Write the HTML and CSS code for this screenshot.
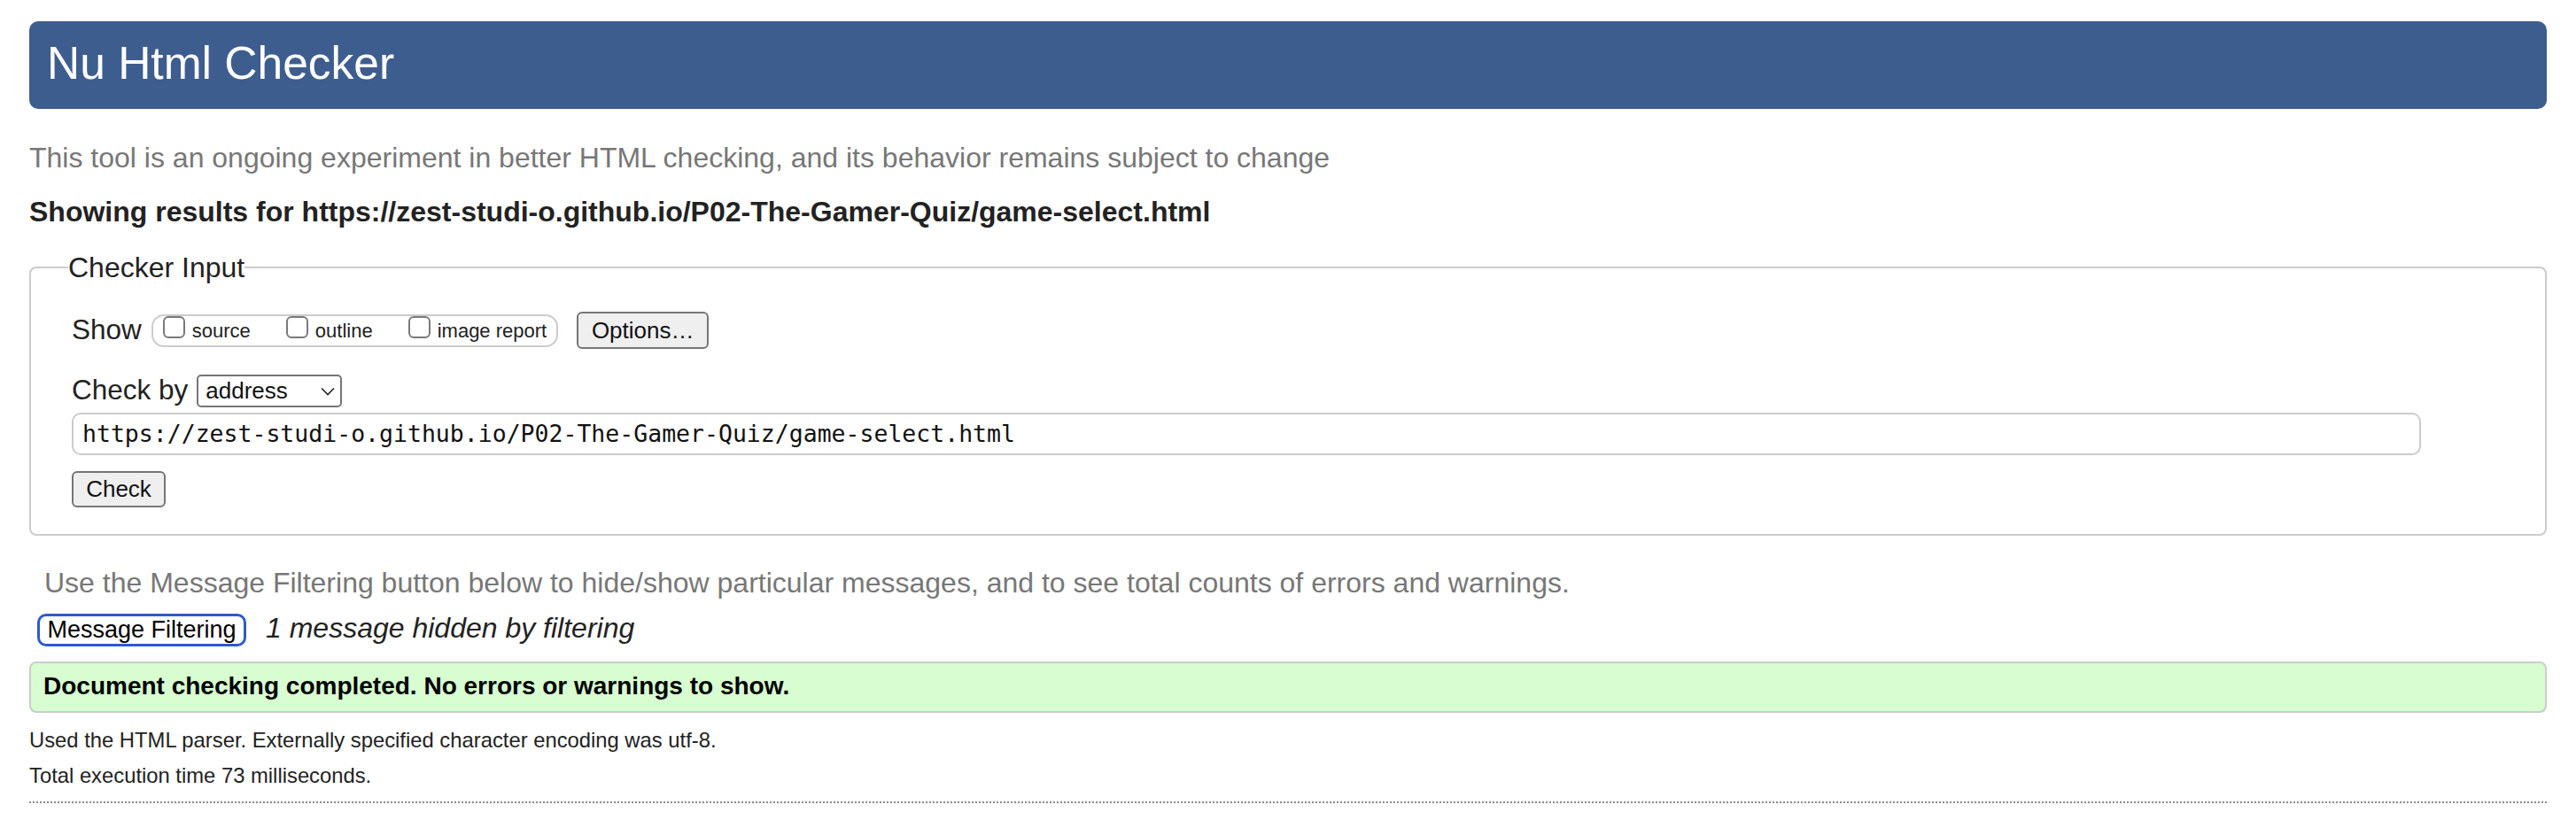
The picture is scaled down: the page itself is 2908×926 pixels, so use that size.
FILE: index.html
```html
<!DOCTYPE html>
<html lang="en">
<head>
<meta charset="utf-8">
<title>Nu Html Checker</title>
<link rel="stylesheet" href="styles.css">
</head>
<body>
<header class="masthead"><h1 class="title">Nu Html Checker</h1></header>
<p class="intro">This tool is an ongoing experiment in better HTML checking, and its behavior remains subject to change</p>
<p class="results-for">Showing results for https://zest-studi-o.github.io/P02-The-Gamer-Quiz/game-select.html</p>
<form class="checker">
  <fieldset class="fs">
    <legend class="legend">Checker Input</legend>
    <div class="row row-show">
      <span class="label">Show</span>
      <span class="show-group">
        <label class="opt"><input type="checkbox" class="cb"><span>source</span></label>
        <label class="opt"><input type="checkbox" class="cb"><span>outline</span></label>
        <label class="opt"><input type="checkbox" class="cb"><span>image report</span></label>
      </span>
      <button type="button" class="btn btn-options">Options…</button>
    </div>
    <div class="row row-by">
      <span class="label">Check by</span>
      <span class="select"><span>address</span><svg class="chev" width="16" height="10" viewBox="0 0 16 10"><path d="M1 1.5 L8 8.5 L15 1.5" fill="none" stroke="#222" stroke-width="1.6"/></svg></span>
    </div>
    <div class="url">https://zest-studi-o.github.io/P02-The-Gamer-Quiz/game-select.html</div>
    <button type="button" class="btn btn-check">Check</button>
  </fieldset>
</form>
<p class="filter-hint">Use the Message Filtering button below to hide/show particular messages, and to see total counts of errors and warnings.</p>
<div class="filter-row">
  <button type="button" class="btn-filter">Message Filtering</button>
  <em class="hidden-count">1 message hidden by filtering</em>
</div>
<div class="success">Document checking completed. No errors or warnings to show.</div>
<p class="meta">Used the HTML parser. Externally specified character encoding was utf-8.</p>
<p class="meta">Total execution time 73 milliseconds.</p>
<hr class="dots">
</body>
</html>
```
FILE: styles.css
```css
html, body {
  margin: 0;
  background: #fff;
}
body {
  padding: 24px 33px 0;
  font-family: "Liberation Sans", Arial, Helvetica, sans-serif;
  color: #222;
}
.masthead {
  background: #3e5d8f;
  border-radius: 10px;
  height: 99px;
  padding-left: 20px;
  box-sizing: border-box;
}
.title {
  margin: 0;
  font-size: 51.5px;
  font-weight: normal;
  line-height: 95px;
  color: #fff;
}
.intro {
  margin: 35px 0 0;
  font-size: 32px;
  line-height: 40px;
  color: #777;
}
.results-for {
  margin: 21px 0 0;
  font-size: 32px;
  font-weight: bold;
  line-height: 40px;
  color: #222;
}
.checker {
  margin: 0;
}
.fs {
  margin: 23px 0 0;
  border: 2px solid #ccc;
  border-radius: 8px;
  padding: 30px 46px 30px 46px;
  min-width: 0;
}
.legend {
  font-size: 32px;
  line-height: 40px;
  padding: 0;
  margin-left: -4px;
  color: #222;
}
.row {
  display: flex;
  align-items: center;
}
.row-show {
  height: 42px;
}
.label {
  font-size: 31.5px;
  line-height: 36px;
  margin-bottom: 3px;
  color: #222;
}
.row-show .label {
  margin-right: 11px;
}
.show-group {
  display: inline-flex;
  align-items: flex-start;
  height: 37px;
  box-sizing: border-box;
  border: 2px solid #ccc;
  border-radius: 14px;
  padding: 0 11px;
  font-size: 22px;
  line-height: 33px;
  gap: 40px;
  color: #222;
}
.opt {
  display: inline-flex;
  align-items: flex-start;
  gap: 8px;
}
.cb {
  -webkit-appearance: none;
  appearance: none;
  width: 25px;
  height: 25px;
  margin: 0;
  border: 2px solid #7a7a7a;
  border-radius: 6px;
  background: #fff;
  box-sizing: border-box;
}
.btn {
  font-family: "Liberation Sans", Arial, Helvetica, sans-serif;
  font-size: 26px;
  color: #111;
  background: #efefef;
  border: 2px solid #767676;
  border-radius: 6px;
  box-sizing: border-box;
  padding: 0;
  line-height: 37px;
  text-align: center;
}
.btn-options {
  width: 149px;
  height: 42px;
  margin-left: 21px;
}
.row-by {
  margin-top: 29px;
  height: 37px;
}
.row-by .label {
  margin-right: 10px;
  margin-bottom: 4px;
}
.select {
  display: inline-flex;
  align-items: center;
  justify-content: space-between;
  width: 164px;
  height: 37px;
  box-sizing: border-box;
  border: 2px solid #767676;
  border-radius: 5px;
  padding: 0 6px 0 8px;
  font-size: 26px;
  color: #111;
}
.chev {
  display: block;
}
.url {
  margin-top: 6px;
  width: 2652px;
  height: 48px;
  box-sizing: border-box;
  border: 2px solid #ccc;
  border-radius: 10px;
  padding-left: 10px;
  font-family: "DejaVu Sans Mono", "Liberation Mono", monospace;
  font-size: 26.5px;
  line-height: 44px;
  color: #111;
  white-space: nowrap;
}
.btn-check {
  display: block;
  margin-top: 18px;
  width: 106px;
  height: 41px;
}
.filter-hint {
  margin: 33px 0 0;
  padding-left: 17px;
  font-size: 32px;
  line-height: 40px;
  color: #777;
}
.filter-row {
  display: flex;
  align-items: center;
  height: 37px;
  margin-top: 15px;
  padding-left: 9px;
}
.btn-filter {
  width: 236px;
  height: 37px;
  box-sizing: border-box;
  border: 3px solid #2b5cc8;
  border-radius: 10px;
  background: #fff;
  padding: 0;
  font-family: "Liberation Sans", Arial, Helvetica, sans-serif;
  font-size: 27px;
  line-height: 31px;
  color: #000;
}
.hidden-count {
  margin-left: 22px;
  margin-bottom: 6px;
  font-size: 32px;
  line-height: 30px;
  font-style: italic;
  color: #222;
}
.success {
  margin-top: 17px;
  height: 58px;
  box-sizing: border-box;
  border: 2px solid #ccc;
  border-radius: 8px;
  background: #d7fdd0;
  padding-left: 14px;
  font-size: 28px;
  font-weight: bold;
  line-height: 52px;
  color: #000;
}
.meta {
  margin: 11px 0 0;
  font-size: 23.8px;
  line-height: 40px;
  color: #222;
}
.meta + .meta {
  margin-top: 0;
}
.dots {
  margin: 9px 0 0;
  height: 0;
  border: 0;
  border-top: 2px dotted #8a8a8a;
}
```
